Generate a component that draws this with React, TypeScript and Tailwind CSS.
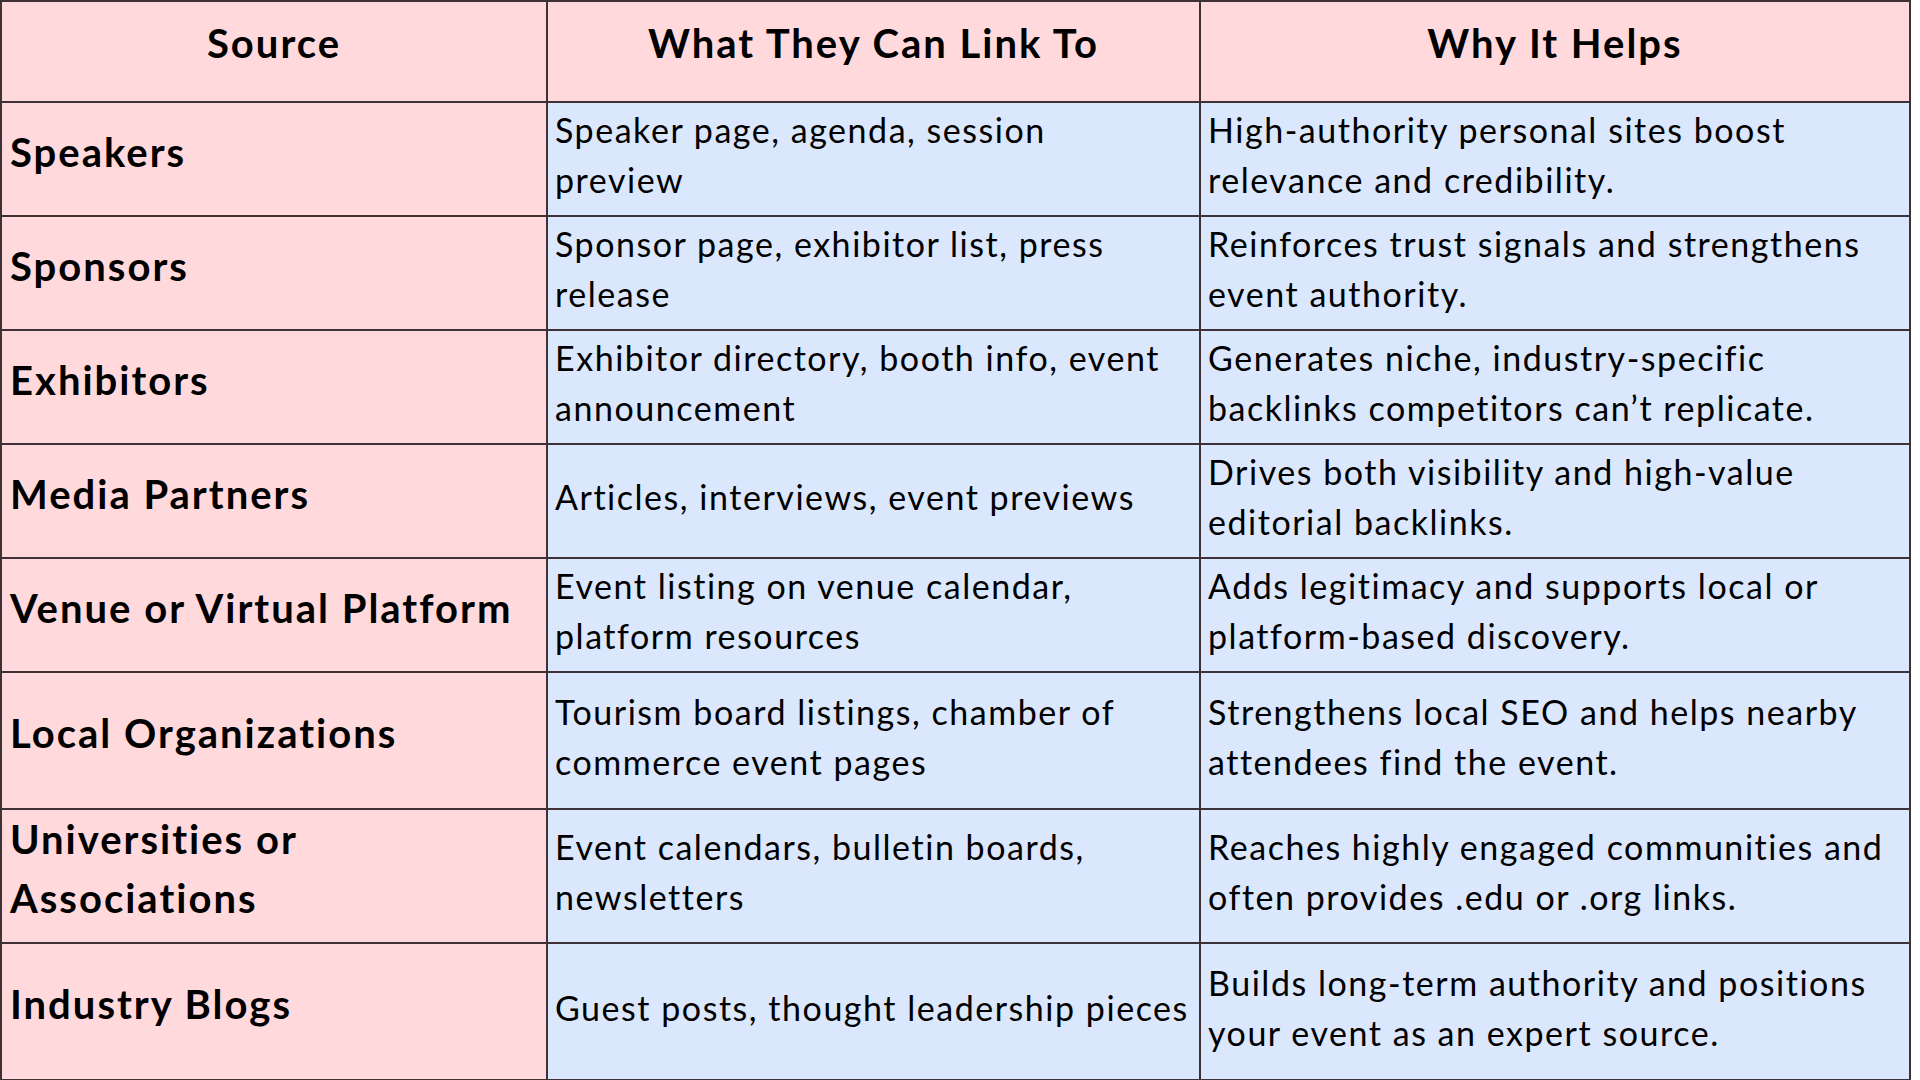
import React from "react";

type Row = {
  source: string[];
  link: string[];
  why: string[];
  h: string;
};

// line breaks kept as in the source table
const rows: Row[] = [
  {
    source: ["Speakers"],
    link: ["Speaker page, agenda, session", "preview"],
    why: ["High-authority personal sites boost", "relevance and credibility."],
    h: "h-[114px]",
  },
  {
    source: ["Sponsors"],
    link: ["Sponsor page, exhibitor list, press", "release"],
    why: ["Reinforces trust signals and strengthens", "event authority."],
    h: "h-[114px]",
  },
  {
    source: ["Exhibitors"],
    link: ["Exhibitor directory, booth info, event", "announcement"],
    why: [
      "Generates niche, industry-specific",
      "backlinks competitors can’t replicate.",
    ],
    h: "h-[114px]",
  },
  {
    source: ["Media Partners"],
    link: ["Articles, interviews, event previews"],
    why: ["Drives both visibility and high-value", "editorial backlinks."],
    h: "h-[114px]",
  },
  {
    source: ["Venue or Virtual Platform"],
    link: ["Event listing on venue calendar,", "platform resources"],
    why: ["Adds legitimacy and supports local or", "platform-based discovery."],
    h: "h-[114px]",
  },
  {
    source: ["Local Organizations"],
    link: ["Tourism board listings, chamber of", "commerce event pages"],
    why: ["Strengthens local SEO and helps nearby", "attendees find the event."],
    h: "h-[137px]",
  },
  {
    source: ["Universities or", "Associations"],
    link: ["Event calendars, bulletin boards,", "newsletters"],
    why: [
      "Reaches highly engaged communities and",
      "often provides .edu or .org links.",
    ],
    h: "h-[134px]",
  },
  {
    source: ["Industry Blogs"],
    link: ["Guest posts, thought leadership pieces"],
    why: [
      "Builds long-term authority and positions",
      "your event as an expert source.",
    ],
    h: "h-[137px]",
  },
];

const cell = "border-2 border-[#3f3236] align-middle";

function Lines({ lines }: { lines: string[] }) {
  return (
    <>
      {lines.map((l) => (
        <span key={l} className="block whitespace-nowrap">
          {l}
        </span>
      ))}
    </>
  );
}

export default function App() {
  return (
    <div className="w-[1920px] h-[1080px] bg-white overflow-hidden font-['Lato','Liberation_Sans',sans-serif] text-black">
      <table className="w-[1909px] border-collapse table-fixed">
        <colgroup>
          <col className="w-[546px]" />
          <col className="w-[653px]" />
          <col className="w-[710px]" />
        </colgroup>
        <thead>
          <tr className="h-[101px] bg-[#ffd9dc]">
            {["Source", "What They Can Link To", "Why It Helps"].map((t) => (
              <th
                key={t}
                className={`${cell} text-center font-bold text-[40px] leading-[46px] tracking-[0.05em] pb-[17px]`}
              >
                {t}
              </th>
            ))}
          </tr>
        </thead>
        <tbody>
          {rows.map((r) => (
            <tr key={r.source[0]} className={r.h}>
              <td
                className={`${cell} bg-[#ffd9dc] pl-[8px] pr-0 pb-[14px] font-bold text-[40px] leading-[59px] tracking-[0.05em]`}
              >
                <Lines lines={r.source} />
              </td>
              <td
                className={`${cell} bg-[#dbe7fc] pl-[7px] pr-0 pb-[8px] text-[34px] leading-[50px] tracking-[0.045em]`}
              >
                <Lines lines={r.link} />
              </td>
              <td
                className={`${cell} bg-[#dbe7fc] pl-[7px] pr-0 pb-[8px] text-[34px] leading-[50px] tracking-[0.045em]`}
              >
                <Lines lines={r.why} />
              </td>
            </tr>
          ))}
        </tbody>
      </table>
    </div>
  );
}
